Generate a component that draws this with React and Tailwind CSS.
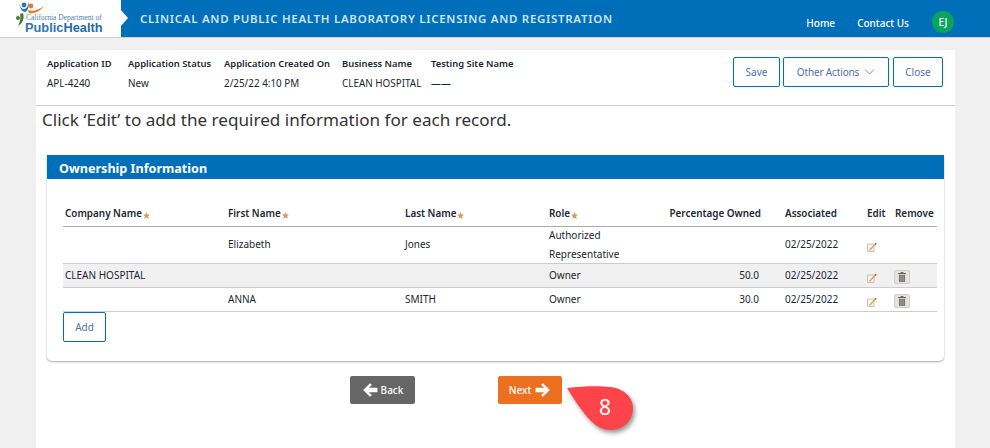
const SUMMARY = [
  { label: 'Application ID', value: 'APL-4240', w: 'w-[81px]' },
  { label: 'Application Status', value: 'New', w: 'w-[96px]' },
  { label: 'Application Created On', value: '2/25/22 4:10 PM', w: 'w-[118px]' },
  { label: 'Business Name', value: 'CLEAN HOSPITAL', w: 'w-[89px]' },
  { label: 'Testing Site Name', value: '——', w: 'w-[100px]' },
]

const ROWS = [
  { company: '', first: 'Elizabeth', last: 'Jones', role: ['Authorized', 'Representative'], roleClass: 'leading-[19px] -mt-[1px] -mb-[3px]', pct: '', remove: false, h: 'h-[37px] pb-[2px]' },
  { company: 'CLEAN HOSPITAL', first: '', last: '', role: ['Owner'], roleClass: 'leading-[18px] pb-[1px]', pct: '50.0', remove: true, h: 'h-[24px]', shaded: true },
  { company: '', first: 'ANNA', last: 'SMITH', role: ['Owner'], roleClass: 'leading-[18px] pb-[1px]', pct: '30.0', remove: true, h: 'h-[24px]' },
]

function Star() {
  return (
    <svg width="7" height="7" viewBox="0 0 10 10" className="inline-block ml-[1px] mb-[-2px]">
      <path d="M5 0l1.5 3.4 3.5.3-2.7 2.3.9 3.6L5 7.7 1.8 9.6l.9-3.6L0 3.7l3.5-.3z" fill="#d9995c" />
    </svg>
  )
}

function EditIcon() {
  return (
    <svg width="10" height="10" viewBox="0 0 10 10">
      <path d="M0.5 2h6.5v7.5H0.5z" fill="#f4f3f0" stroke="#b9b8b4" strokeWidth="0.8" />
      <path d="M2.5 7.5L8.6 0.8l1 1L3.5 8.3l-1.4.4z" fill="#e0a040" />
      <path d="M8.6 0.8l1 1-.9 1-1-1z" fill="#c0503a" />
    </svg>
  )
}

function TrashButton() {
  return (
    <span className="flex w-[16px] h-[14px] items-center justify-center rounded-[2px] border border-[#d0cec8] bg-[#e6e4de]">
      <svg width="8" height="10" viewBox="0 0 9 11">
        <path d="M3 0h3v1h3v1.2H0V1h3z" fill="#66645f" />
        <path d="M1 3h7v8H1z" fill="#77756f" />
        <path d="M3 4v6M4.5 4v6M6 4v6" stroke="#b5b3ad" strokeWidth="0.6" />
      </svg>
    </span>
  )
}

function OutlineButton({ children, className = '' }) {
  return (
    <button className={`h-[30px] rounded-[2px] border border-[#006fba] bg-white text-[10px] text-[#4f6fae] ${className}`}>
      {children}
    </button>
  )
}

function Logo() {
  return (
    <div className="relative w-[121px] h-[37px] bg-white shrink-0">
      <svg width="32" height="28" viewBox="0 0 32 28" className="absolute left-[14px] top-0">
        <circle cx="10" cy="5" r="2.4" fill="#2e74b5" />
        <path d="M5 3c1 4 3 6 5 6s4-2 5-8c0 6-1 10-4 11-3 0-5-4-6-9z" fill="#2e74b5" />
        <circle cx="17" cy="6" r="2.4" fill="#e8792e" />
        <path d="M14 10c5 2 10 0 16-4-4 5-9 8-15 7z" fill="#e8792e" />
        <circle cx="4" cy="18" r="2" fill="#4d7a32" />
        <path d="M9 13c2 6-1 11-5 13 2-4 3-8 2-12z" fill="#4d7a32" />
      </svg>
      <div className="absolute left-[26px] top-[14px] font-['Liberation_Serif',serif] text-[7.5px] leading-[7px] whitespace-nowrap text-[#4a7fb0]">
        California Department of
      </div>
      <div className="absolute left-[25px] top-[22px] font-['Liberation_Sans',sans-serif] text-[12.8px] leading-[11px] font-bold whitespace-nowrap text-[#2e74b5]">
        Public<span className="text-[#1f6aa5]">Health</span>
      </div>
    </div>
  )
}

export default function App() {
  return (
    <div className="relative w-[990px] h-[448px] overflow-hidden bg-[#f0f0f0] font-['Noto_Sans',sans-serif] text-[#1b2733]">
      {/* Top bar */}
      <header className="relative flex h-[38px] border-b border-[#cfcfcf] bg-[#006fba]">
        <Logo />
        <div className="ml-[-1px] w-0 h-0 mt-[9px] border-y-[9px] border-y-transparent border-l-[8px] border-l-white" />
        <div className="ml-[12px] pt-[10px] text-[11.5px] leading-[17px] font-semibold tracking-[0.7px] text-[#cfe4f3]">
          CLINICAL AND PUBLIC HEALTH LABORATORY LICENSING AND REGISTRATION
        </div>
        <nav className="ml-auto flex items-start pr-[36px] text-[10px] font-medium text-white">
          <span className="mt-[16px] leading-[14px]">Home</span>
          <span className="ml-[22px] mt-[16px] leading-[14px]">Contact Us</span>
          <span className="ml-[23px] mt-[11px] flex h-[22px] w-[22px] items-center justify-center rounded-full bg-[#0aa35f] text-[10px]">EJ</span>
        </nav>
      </header>

      {/* Page */}
      <main className="mx-[36px] mt-[12px] h-[398px] w-[919px] bg-white">
        <section className="flex h-[56px] border-b border-[#cccccc] pl-[11px] pr-[12px]">
          {SUMMARY.map(s => (
            <div key={s.label} className={`${s.w} shrink-0 pt-[7px] whitespace-nowrap`}>
              <div className="text-[9.4px] leading-[13px] font-semibold">{s.label}</div>
              <div className="mt-[7px] text-[9.9px] leading-[13px]">{s.value}</div>
            </div>
          ))}
          <div className="ml-auto flex gap-[3px] pt-[7px]">
            <OutlineButton className="w-[47px]">Save</OutlineButton>
            <OutlineButton className="w-[106px] mr-[1px] flex items-center justify-center gap-[5px] tracking-[-0.15px]">
              Other Actions
              <svg width="11" height="6" viewBox="0 0 10 6" fill="none" stroke="#4f6fae" strokeWidth="0.8"><path d="M0.5 0.5L5 5l4.5-4.5" /></svg>
            </OutlineButton>
            <OutlineButton className="w-[50px]">Close</OutlineButton>
          </div>
        </section>

        <h1 className="pl-[6px] pt-[2px] text-[17.1px] leading-[24px] font-normal text-[#333]">
          Click ‘Edit’ to add the required information for each record.
        </h1>

        {/* Ownership card */}
        <section className="mx-[11px] mt-[23px] h-[206px] w-[897px] rounded-b-[5px] bg-white shadow-[0_1px_2px_rgba(0,0,0,0.35)]">
          <h2 className="h-[24px] bg-[#006fba] pl-[12px] text-[12.6px] leading-[27px] font-bold text-white">
            Ownership Information
          </h2>
          <div className="pl-[16px] pt-[26px]">
            <div className="grid h-[22px] w-[874px] grid-cols-[163px_177px_144px_122px_92px_104px_28px_1fr] border-b border-[#aaa9ad] text-[9.9px] leading-[16px] font-semibold whitespace-nowrap">
              <div className="pl-[2px]">Company Name<Star /></div>
              <div className="pl-[2px]">First Name<Star /></div>
              <div className="pl-[2px]">Last Name<Star /></div>
              <div className="pl-[2px]">Role<Star /></div>
              <div className="text-right">Percentage Owned</div>
              <div className="pl-[24px]">Associated</div>
              <div className="pl-[2px]">Edit</div>
              <div className="pl-[2px]">Remove</div>
            </div>
            {ROWS.map((r, i) => (
              <div
                key={i}
                className={`grid ${r.h} w-[874px] grid-cols-[163px_177px_144px_122px_92px_104px_28px_1fr] items-center border-b border-[#cccccc] text-[10px] whitespace-nowrap ${r.shaded ? 'bg-[#f0f0f0]' : ''}`}
              >
                <div className="pl-[2px]">{r.company}</div>
                <div className="pl-[2px]">{r.first}</div>
                <div className="pl-[2px]">{r.last}</div>
                <div className={`pl-[2px] ${r.roleClass}`}>
                  {r.role.map(line => <div key={line}>{line}</div>)}
                </div>
                <div className="text-right pr-[2px]">{r.pct}</div>
                <div className="pl-[24px]">02/25/2022</div>
                <div className="pl-[2px] pt-[5px]"><EditIcon /></div>
                <div className="pl-[1px] pt-[2px]">{r.remove && <TrashButton />}</div>
              </div>
            ))}
            <OutlineButton className="w-[43px]">Add</OutlineButton>
          </div>
        </section>

        {/* Back / Next */}
        <div className="mt-[15px] flex pl-[314px]">
          <button className="flex h-[28px] w-[65px] items-center justify-center gap-[3px] rounded-[2px] bg-[#666666] text-[10px] font-medium text-white">
            <svg width="16" height="16" viewBox="0 0 14 14" fill="white"><path d="M7 1L1 7l6 6 1.6-1.6L6 9h7.5V5H6l2.6-2.4z" /></svg>
            Back
          </button>
          <button className="ml-[83px] flex h-[28px] w-[64px] items-center justify-center gap-[4px] rounded-[2px] bg-[#ed7020] text-[10px] font-medium text-white">
            Next
            <svg width="16" height="16" viewBox="0 0 14 14" fill="white"><path d="M7 1l6 6-6 6-1.6-1.6L8 9H.5V5H8L5.4 2.4z" /></svg>
          </button>
        </div>
      </main>

      {/* Step callout */}
      <div className="absolute left-[566px] top-[386px] h-[48px] w-[70px]">
        <svg width="70" height="48" viewBox="0 0 70 48" className="drop-shadow-[2px_3px_2px_rgba(0,0,0,0.4)]">
          <path d="M1 2C18 0 34 0 44 1c12 1 23 9 23 21 0 13-10 22-22 22-8 0-14-3-20-9C16 26 8 13 1 2z" fill="#fd444b" />
        </svg>
        <span className="absolute left-[33px] top-[8px] text-[21px] leading-[26px] text-white">8</span>
      </div>
    </div>
  )
}
